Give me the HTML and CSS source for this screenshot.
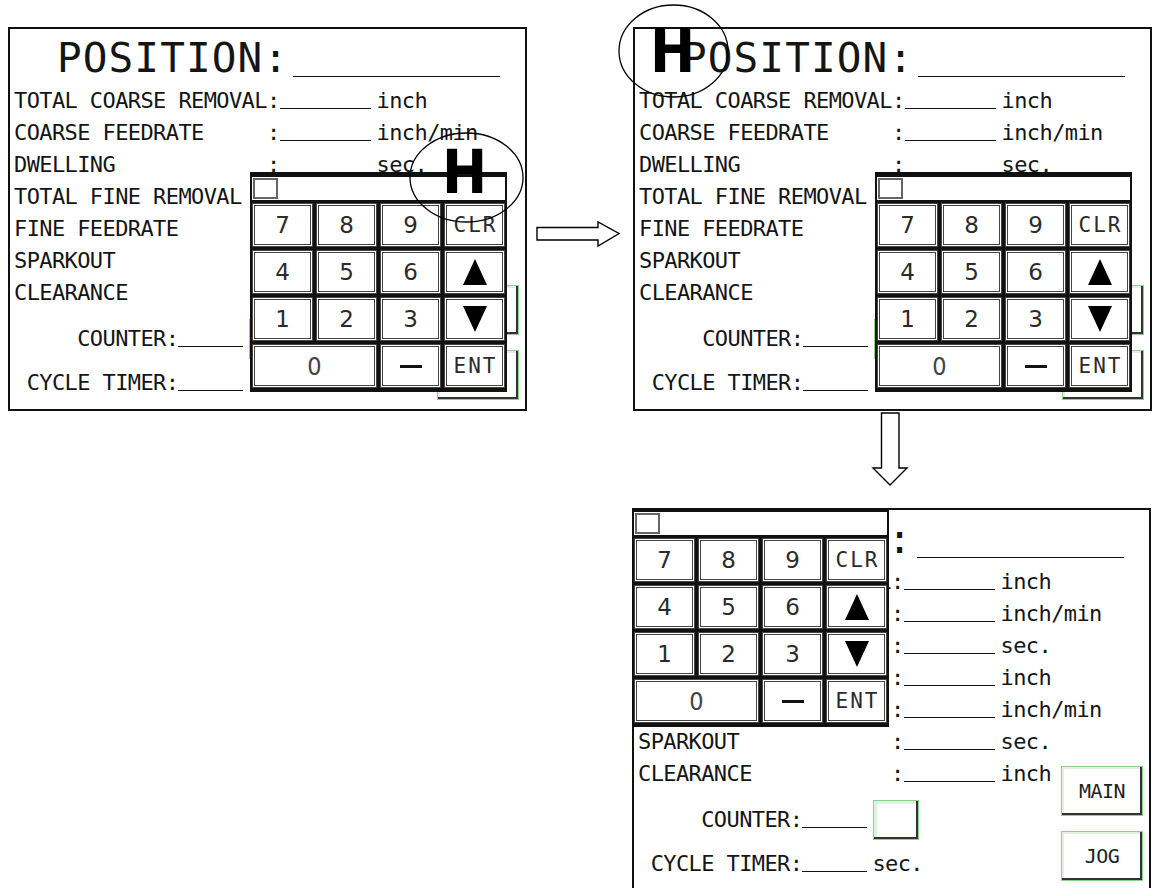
FILE: index.html
```html
<!DOCTYPE html>
<html lang="en">
<head>
<meta charset="utf-8">
<title>Keypad position diagram</title>
<link rel="stylesheet" href="styles.css">
</head>
<body>
<div class="canvas">

  <!-- Screen 1 -->
  <div class="screen screen-1">
    <div class="title">POSITION:<span class="title-blank"></span></div>
    <div class="body">
      <div class="fields">
        <div class="row">TOTAL COARSE REMOVAL:<span class="blank"></span>inch</div>
        <div class="row">COARSE FEEDRATE     :<span class="blank"></span>inch/min</div>
        <div class="row">DWELLING            :<span class="blank"></span>sec.</div>
        <div class="row">TOTAL FINE REMOVAL  :<span class="blank"></span>inch</div>
        <div class="row">FINE FEEDRATE       :<span class="blank"></span>inch/min</div>
        <div class="row">SPARKOUT            :<span class="blank"></span>sec.</div>
        <div class="row">CLEARANCE           :<span class="blank"></span>inch</div>
        <div class="counter-row"><span class="txt">     COUNTER:<span class="blank short"></span></span><span class="sq"></span></div>
        <div class="cycle-row"> CYCLE TIMER:<span class="blank short"></span>sec.</div>
      </div>
      <div class="side">
        <div class="soft">MAIN</div>
        <div class="soft">JOG</div>
      </div>
    </div>
    <div class="keypad">
      <div class="kp-display"><span class="kp-cursor"></span></div>
      <div class="key">7</div><div class="key">8</div><div class="key">9</div><div class="key key-txt">CLR</div>
      <div class="key">4</div><div class="key">5</div><div class="key">6</div><div class="key"><svg class="tri" viewBox="0 0 24 26"><polygon points="12,0 24,26 0,26"/></svg></div>
      <div class="key">1</div><div class="key">2</div><div class="key">3</div><div class="key"><svg class="tri" viewBox="0 0 24 26"><polygon points="0,0 24,0 12,26"/></svg></div>
      <div class="key key-wide key-zero">0</div><div class="key"><span class="dash"></span></div><div class="key key-txt">ENT</div>
    </div>
  </div>

  <!-- Screen 2 -->
  <div class="screen screen-2">
    <div class="title">POSITION:<span class="title-blank"></span></div>
    <div class="body">
      <div class="fields">
        <div class="row">TOTAL COARSE REMOVAL:<span class="blank"></span>inch</div>
        <div class="row">COARSE FEEDRATE     :<span class="blank"></span>inch/min</div>
        <div class="row">DWELLING            :<span class="blank"></span>sec.</div>
        <div class="row">TOTAL FINE REMOVAL  :<span class="blank"></span>inch</div>
        <div class="row">FINE FEEDRATE       :<span class="blank"></span>inch/min</div>
        <div class="row">SPARKOUT            :<span class="blank"></span>sec.</div>
        <div class="row">CLEARANCE           :<span class="blank"></span>inch</div>
        <div class="counter-row"><span class="txt">     COUNTER:<span class="blank short"></span></span><span class="sq"></span></div>
        <div class="cycle-row"> CYCLE TIMER:<span class="blank short"></span>sec.</div>
      </div>
      <div class="side">
        <div class="soft">MAIN</div>
        <div class="soft">JOG</div>
      </div>
    </div>
    <div class="keypad">
      <div class="kp-display"><span class="kp-cursor"></span></div>
      <div class="key">7</div><div class="key">8</div><div class="key">9</div><div class="key key-txt">CLR</div>
      <div class="key">4</div><div class="key">5</div><div class="key">6</div><div class="key"><svg class="tri" viewBox="0 0 24 26"><polygon points="12,0 24,26 0,26"/></svg></div>
      <div class="key">1</div><div class="key">2</div><div class="key">3</div><div class="key"><svg class="tri" viewBox="0 0 24 26"><polygon points="0,0 24,0 12,26"/></svg></div>
      <div class="key key-wide key-zero">0</div><div class="key"><span class="dash"></span></div><div class="key key-txt">ENT</div>
    </div>
  </div>

  <!-- Screen 3 -->
  <div class="screen screen-3">
    <div class="title">POSITION:<span class="title-blank"></span></div>
    <div class="body">
      <div class="fields">
        <div class="row">TOTAL COARSE REMOVAL:<span class="blank"></span>inch</div>
        <div class="row">COARSE FEEDRATE     :<span class="blank"></span>inch/min</div>
        <div class="row">DWELLING            :<span class="blank"></span>sec.</div>
        <div class="row">TOTAL FINE REMOVAL  :<span class="blank"></span>inch</div>
        <div class="row">FINE FEEDRATE       :<span class="blank"></span>inch/min</div>
        <div class="row">SPARKOUT            :<span class="blank"></span>sec.</div>
        <div class="row">CLEARANCE           :<span class="blank"></span>inch</div>
        <div class="counter-row"><span class="txt">     COUNTER:<span class="blank short"></span></span><span class="sq"></span></div>
        <div class="cycle-row"> CYCLE TIMER:<span class="blank short"></span>sec.</div>
      </div>
      <div class="side">
        <div class="soft">MAIN</div>
        <div class="soft">JOG</div>
      </div>
    </div>
    <div class="keypad keypad-corner">
      <div class="kp-display"><span class="kp-cursor"></span></div>
      <div class="key">7</div><div class="key">8</div><div class="key">9</div><div class="key key-txt">CLR</div>
      <div class="key">4</div><div class="key">5</div><div class="key">6</div><div class="key"><svg class="tri" viewBox="0 0 24 26"><polygon points="12,0 24,26 0,26"/></svg></div>
      <div class="key">1</div><div class="key">2</div><div class="key">3</div><div class="key"><svg class="tri" viewBox="0 0 24 26"><polygon points="0,0 24,0 12,26"/></svg></div>
      <div class="key key-wide key-zero">0</div><div class="key"><span class="dash"></span></div><div class="key key-txt">ENT</div>
    </div>
  </div>

  <!-- Annotations: drag handle marks, circles and flow arrows -->
  <span class="mark mark-1">H</span>
  <span class="mark mark-2">H</span>
  <svg class="overlay" width="1152" height="888" viewBox="0 0 1152 888">
    <ellipse cx="466.5" cy="177.5" rx="56.5" ry="44.5" fill="none" stroke="#000" stroke-width="1.3"/>
    <ellipse cx="673.5" cy="51" rx="54.5" ry="46" fill="none" stroke="#000" stroke-width="1.3"/>
    <polygon points="537,227.5 598,227.5 598,222 619,233.5 598,246 598,240 537,240" fill="#fff" stroke="#000" stroke-width="1.4"/>
    <polygon points="881.5,413 899,413 899,468 907,468 890,485 873,468 881.5,468" fill="#fff" stroke="#000" stroke-width="1.4"/>
  </svg>
</div>
</body>
</html>
```

FILE: styles.css
```css
* { box-sizing: border-box; }

html, body {
  margin: 0;
  background: #fff;
}

.canvas {
  position: relative;
  width: 1152px;
  height: 888px;
  overflow: hidden;
  background: #fff;
}

/* ---------- HMI screen ---------- */
.screen {
  position: absolute;
  width: 519px;
  height: 384px;
  border: 2px solid #111;
  background: #fff;
  display: flex;
  flex-direction: column;
  font-family: "DejaVu Sans Mono", monospace;
  color: #151515;
}

.screen-1 { left: 8px; top: 27px; }
.screen-2 { left: 633px; top: 27px; }
.screen-3 { left: 632px; top: 508px; }

.title {
  padding: 7px 0 0 47px;
  font-size: 41px;
  letter-spacing: 1.1px;
  line-height: 44px;
  height: 51px;
  white-space: nowrap;
}

.title-blank {
  display: inline-block;
  width: 207px;
  height: 0;
  margin-left: 4px;
  margin-bottom: -5px;
  border-bottom: 1px solid #111;
}

.body {
  flex: 1;
  display: flex;
  margin-top: 5px;
  padding-left: 4px;
  min-height: 0;
}

.fields {
  width: 423px;
  font-size: 22px;
  letter-spacing: -0.6px;
}

.row {
  height: 32px;
  line-height: 32px;
  white-space: pre;
}

.blank {
  display: inline-block;
  width: 91px;
  height: 0;
  margin-right: 6px;
  margin-bottom: -1px;
  border-bottom: 1px solid #111;
}

.blank.short {
  width: 65px;
  margin-right: 5px;
}

.counter-row {
  display: flex;
  align-items: center;
  height: 40px;
  margin-top: 10px;
}

.counter-row .txt {
  line-height: 32px;
  white-space: pre;
}

.sq {
  width: 46px;
  height: 40px;
  margin-left: 1px;
  background: #fff;
  border: 1px solid #8fd08f;
  box-shadow: inset -2px -2px 0 #333, inset 3px 3px 0 #dff2df;
}

.cycle-row {
  line-height: 32px;
  height: 32px;
  margin-top: 8px;
  white-space: pre;
}

.side {
  width: 82px;
  display: flex;
  flex-direction: column;
  justify-content: flex-end;
  gap: 15px;
  padding-bottom: 9px;
}

.soft {
  height: 50px;
  display: flex;
  align-items: center;
  justify-content: center;
  background: #fff;
  border: 1px solid #8fd08f;
  box-shadow: inset -2px -2px 0 #333, inset 2px 2px 0 #dff2df;
  font-size: 20px;
  letter-spacing: -0.5px;
  color: #222;
}

/* ---------- keypad popup ---------- */
.keypad {
  position: absolute;
  left: 240px;
  top: 143px;
  width: 257px;
  height: 220px;
  padding: 5px 2px 4px;
  background: #111;
  display: grid;
  grid-template-columns: repeat(4, 61px);
  grid-template-rows: 23px repeat(4, 44px);
  gap: 3px;
}

.keypad-corner {
  left: -2px;
  top: -2px;
  padding-top: 4px;
  height: 219px;
}

.kp-display {
  grid-column: 1 / -1;
  background: #fff;
  padding: 1px;
}

.kp-cursor {
  display: block;
  width: 25px;
  height: 21px;
  border: 2px solid #666;
}

.key {
  background: #fff;
  border: 3px double #444;
  display: flex;
  align-items: center;
  justify-content: center;
  font-family: "DejaVu Sans", sans-serif;
  font-size: 23px;
  color: #2b2b2b;
}

.key-txt {
  font-family: "DejaVu Sans Mono", monospace;
  font-size: 21px;
  letter-spacing: 2px;
  padding-left: 2px;
}

.key-wide {
  grid-column: span 2;
}

.key-zero {
  font-stretch: condensed;
  font-size: 25px;
  color: #444;
}

.dash {
  display: block;
  width: 22px;
  height: 3px;
  background: #111;
}

.tri {
  width: 24px;
  height: 26px;
  fill: #000;
}

/* ---------- annotations ---------- */
.mark {
  position: absolute;
  font-family: "DejaVu Sans", sans-serif;
  font-weight: bold;
  font-stretch: condensed;
  font-size: 60px;
  line-height: 60px;
  color: #000;
}

.mark-1 { left: 442px; top: 142px; }
.mark-2 { left: 650px; top: 21px; }

.overlay {
  position: absolute;
  left: 0;
  top: 0;
  pointer-events: none;
}
```
